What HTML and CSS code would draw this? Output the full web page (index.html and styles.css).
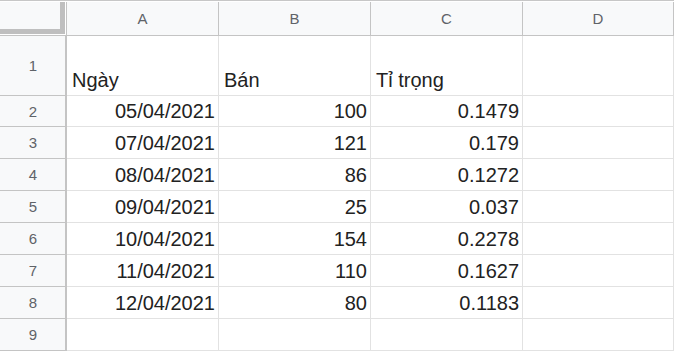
FILE: index.html
```html
<!DOCTYPE html>
<html lang="vi">
<head>
<meta charset="utf-8">
<title>Sheet</title>
<link rel="stylesheet" href="styles.css">
</head>
<body>
<div class="sheet">
  <div class="corner"><div class="corner-inner"></div></div>
  <div class="colhead">A</div>
  <div class="colhead">B</div>
  <div class="colhead">C</div>
  <div class="colhead">D</div>

  <div class="rowhead r1">1</div>
  <div class="cell left r1">Ngày</div>
  <div class="cell left r1">Bán</div>
  <div class="cell left r1">Tỉ trọng</div>
  <div class="cell r1"></div>

  <div class="rowhead r2">2</div>
  <div class="cell r2">05/04/2021</div>
  <div class="cell r2">100</div>
  <div class="cell r2">0.1479</div>
  <div class="cell r2"></div>

  <div class="rowhead">3</div>
  <div class="cell">07/04/2021</div>
  <div class="cell">121</div>
  <div class="cell">0.179</div>
  <div class="cell"></div>

  <div class="rowhead">4</div>
  <div class="cell">08/04/2021</div>
  <div class="cell">86</div>
  <div class="cell">0.1272</div>
  <div class="cell"></div>

  <div class="rowhead">5</div>
  <div class="cell">09/04/2021</div>
  <div class="cell">25</div>
  <div class="cell">0.037</div>
  <div class="cell"></div>

  <div class="rowhead">6</div>
  <div class="cell">10/04/2021</div>
  <div class="cell">154</div>
  <div class="cell">0.2278</div>
  <div class="cell"></div>

  <div class="rowhead">7</div>
  <div class="cell">11/04/2021</div>
  <div class="cell">110</div>
  <div class="cell">0.1627</div>
  <div class="cell"></div>

  <div class="rowhead">8</div>
  <div class="cell">12/04/2021</div>
  <div class="cell">80</div>
  <div class="cell">0.1183</div>
  <div class="cell"></div>

  <div class="rowhead">9</div>
  <div class="cell"></div>
  <div class="cell"></div>
  <div class="cell"></div>
  <div class="cell"></div>
</div>
</body>
</html>
```

FILE: styles.css
```css
html, body {
  margin: 0;
  padding: 0;
  background: #ffffff;
  overflow: hidden;
}

.sheet {
  width: 674px;
  display: grid;
  grid-template-columns: 67px 152px 152px 152px 151px;
  grid-template-rows: 34px 60px 31px repeat(7, 32px);
  border-top: 1px solid #c7c7c7;
  padding-top: 1px;
  font-family: "Liberation Sans", Arial, sans-serif;
}

.corner {
  box-sizing: border-box;
  background: #ffffff;
  border-right: 1px solid #c4c4c4;
  border-bottom: 1px solid #c4c4c4;
  padding: 0 1px 1px 0;
  display: flex;
}

.corner-inner {
  flex: 1;
  box-sizing: border-box;
  background: #f8f9fa;
  border-right: 5px solid #bfbfbf;
  border-bottom: 5px solid #bfbfbf;
}

.colhead {
  box-sizing: border-box;
  background: #f8f9fa;
  border-right: 1px solid #c4c4c4;
  border-bottom: 1px solid #c4c4c4;
  display: flex;
  align-items: center;
  justify-content: center;
  font-size: 15px;
  color: #5f6368;
  padding-bottom: 1px;
}

.rowhead {
  box-sizing: border-box;
  background: #f8f9fa;
  border-right: 2px solid #c4c4c4;
  border-bottom: 1px solid #c4c4c4;
  display: flex;
  align-items: center;
  justify-content: center;
  font-size: 15px;
  color: #5f6368;
  padding-left: 1px;
}

.cell {
  box-sizing: border-box;
  border-right: 1px solid #e2e2e2;
  border-bottom: 1px solid #e2e2e2;
  display: flex;
  align-items: flex-end;
  justify-content: flex-end;
  padding: 0 3px 3px 5px;
  font-size: 20px;
  line-height: 23px;
  color: #222222;
  white-space: nowrap;
  overflow: hidden;
}

.cell.left {
  justify-content: flex-start;
}
```
